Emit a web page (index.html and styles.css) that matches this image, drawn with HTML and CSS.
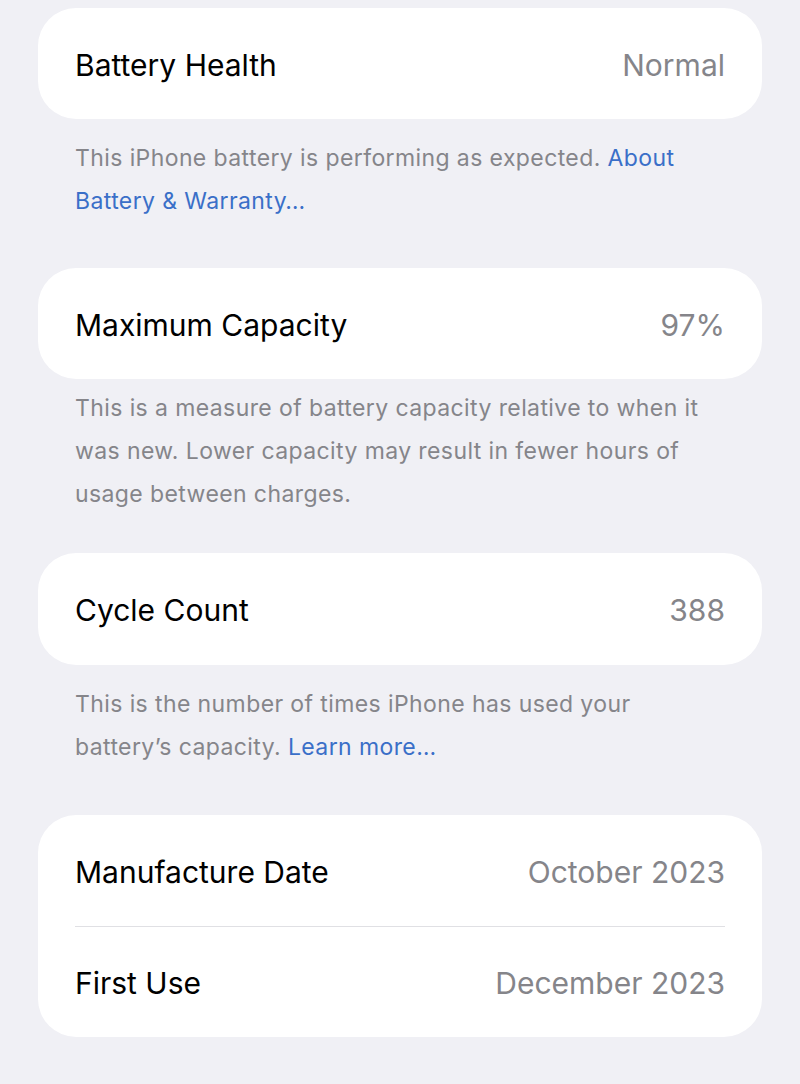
FILE: index.html
```html
<!DOCTYPE html>
<html lang="en">
<head>
<meta charset="utf-8">
<title>Battery Health</title>
<link rel="stylesheet" href="styles.css">
</head>
<body>
<main class="page">
  <section class="group group-health">
    <div class="card">
      <div class="row"><span class="label">Battery Health</span><span class="value">Normal</span></div>
    </div>
    <p class="note">This iPhone battery is performing as expected. <a class="link" href="#">About<br>Battery &amp; Warranty…</a></p>
  </section>

  <section class="group group-capacity">
    <div class="card">
      <div class="row"><span class="label">Maximum Capacity</span><span class="value">97%</span></div>
    </div>
    <p class="note">This is a measure of battery capacity relative to when it<br>was new. Lower capacity may result in fewer hours of<br>usage between charges.</p>
  </section>

  <section class="group group-cycle">
    <div class="card">
      <div class="row row-tall"><span class="label">Cycle Count</span><span class="value">388</span></div>
    </div>
    <p class="note">This is the number of times iPhone has used your<br>battery’s capacity. <a class="link" href="#">Learn more…</a></p>
  </section>

  <section class="group group-dates">
    <div class="card">
      <div class="row"><span class="label">Manufacture Date</span><span class="value">October 2023</span></div>
      <div class="row row-divided"><span class="label">First Use</span><span class="value">December 2023</span></div>
    </div>
  </section>
</main>
</body>
</html>
```

FILE: styles.css
```css
html, body {
  margin: 0;
  padding: 0;
  background: #f0f0f5;
}

body {
  font-family: Inter, "Liberation Sans", Arial, sans-serif;
  -webkit-font-smoothing: antialiased;
}

.page {
  padding: 8px 38px 0;
  display: flex;
  flex-direction: column;
}

.card {
  background: #ffffff;
  border-radius: 38px;
  display: flex;
  flex-direction: column;
}

.row {
  height: 111px;
  box-sizing: border-box;
  padding: 2px 37px 0;
  display: flex;
  align-items: center;
  justify-content: space-between;
  position: relative;
  font-size: 30px;
  letter-spacing: 0;
}

.row-tall {
  height: 112px;
}

.row-divided::before {
  content: "";
  position: absolute;
  top: 0;
  left: 37px;
  right: 37px;
  height: 1px;
  background: #e0e0e4;
}

.label {
  color: #000000;
}

.value {
  color: #85858a;
}

.note {
  margin: 0;
  padding: 0 37px;
  font-size: 23px;
  letter-spacing: 0.4px;
  line-height: 43px;
  color: #85858a;
  white-space: nowrap;
}

.link {
  color: #3a6fc8;
  text-decoration: none;
}

.group-health .note { padding-top: 18px; }
.group-capacity { margin-top: 45px; }
.group-capacity .note { padding-top: 8px; }
.group-cycle { margin-top: 37px; }
.group-cycle .note { padding-top: 18px; }
.group-dates { margin-top: 46px; }
```
